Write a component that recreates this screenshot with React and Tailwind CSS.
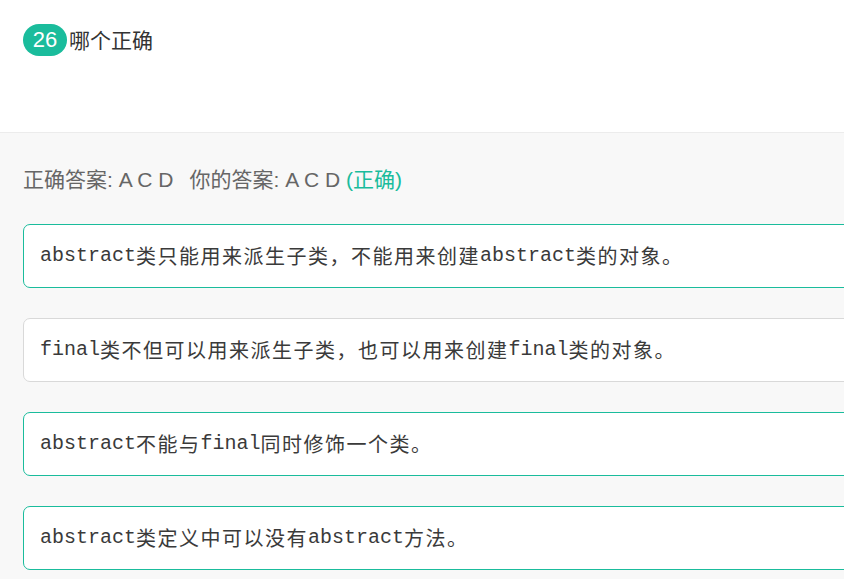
import React from "react";

const sans = { fontFamily: '"Liberation Sans", Arial, "Noto Sans CJK SC", sans-serif' };

function Card({ parts, correct }) {
  return (
    <div
      className={`w-[860px] h-[64px] flex items-center pl-[16px] bg-white rounded-[7px] border ${
        correct ? "border-[#1abc9c]" : "border-[#d9d9d9]"
      } text-[20px] text-[#3a3a3a] whitespace-nowrap`}
      style={{ fontFamily: '"Liberation Mono", "Courier New", "Noto Sans CJK SC", monospace' }}
    >
      {parts.map((p, i) =>
        i % 2 === 0 ? (
          <span key={i}>{p}</span>
        ) : (
          <span key={i} className="tracking-[1.5px]" style={{ fontFamily: '"Noto Sans CJK SC", sans-serif' }}>
            {p}
          </span>
        )
      )}
    </div>
  );
}

export default function App() {
  return (
    <div className="w-[844px] h-[579px] overflow-hidden bg-white" style={sans}>
      <div className="h-[132px] pt-[24px] pl-[23px] flex items-start">
        <div className="flex items-center">
          <span className="h-[32px] w-[44px] rounded-full bg-[#1abc9c] text-white text-[22px] flex items-center justify-center leading-none">
            26
          </span>
          <span className="ml-[2px] text-[21px] text-[#333] leading-none">哪个正确</span>
        </div>
      </div>
      <div className="border-t border-[#ececec] bg-[#f8f8f8] h-[447px] pl-[23px]">
        <div className="pt-[33px] h-[91px] text-[21px] text-[#666] leading-[28px] whitespace-nowrap">
          <span>正确答案: A C D</span>
          <span className="ml-[16px]">你的答案: A C D </span>
          <span className="text-[#1abc9c]">(正确)</span>
        </div>
        <div className="flex flex-col gap-[30px]">
          <Card correct parts={["abstract", "类只能用来派生子类，不能用来创建", "abstract", "类的对象。"]} />
          <Card parts={["final", "类不但可以用来派生子类，也可以用来创建", "final", "类的对象。"]} />
          <Card correct parts={["abstract", "不能与", "final", "同时修饰一个类。"]} />
          <Card correct parts={["abstract", "类定义中可以没有", "abstract", "方法。"]} />
        </div>
      </div>
    </div>
  );
}
